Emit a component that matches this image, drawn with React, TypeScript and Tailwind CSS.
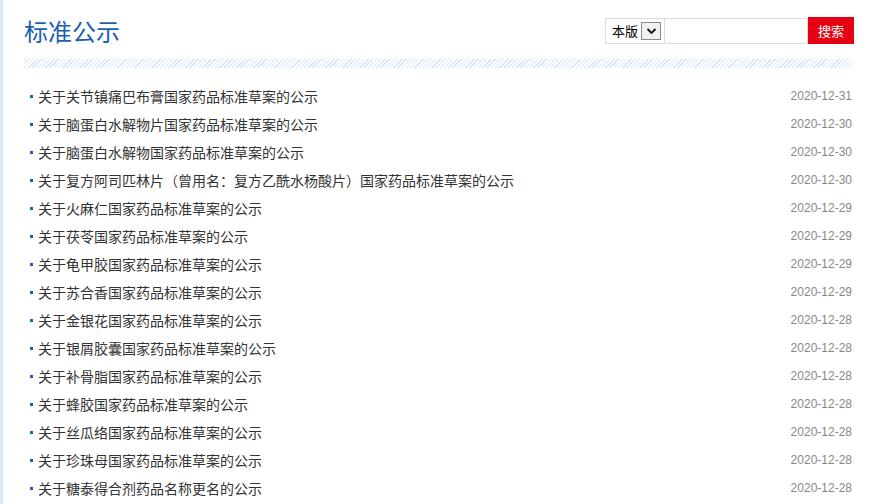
import React from 'react';

const items: [string, string][] = [
  ['关于关节镇痛巴布膏国家药品标准草案的公示', '2020-12-31'],
  ['关于脑蛋白水解物片国家药品标准草案的公示', '2020-12-30'],
  ['关于脑蛋白水解物国家药品标准草案的公示', '2020-12-30'],
  ['关于复方阿司匹林片（曾用名：复方乙酰水杨酸片）国家药品标准草案的公示', '2020-12-30'],
  ['关于火麻仁国家药品标准草案的公示', '2020-12-29'],
  ['关于茯苓国家药品标准草案的公示', '2020-12-29'],
  ['关于龟甲胶国家药品标准草案的公示', '2020-12-29'],
  ['关于苏合香国家药品标准草案的公示', '2020-12-29'],
  ['关于金银花国家药品标准草案的公示', '2020-12-28'],
  ['关于银屑胶囊国家药品标准草案的公示', '2020-12-28'],
  ['关于补骨脂国家药品标准草案的公示', '2020-12-28'],
  ['关于蜂胶国家药品标准草案的公示', '2020-12-28'],
  ['关于丝瓜络国家药品标准草案的公示', '2020-12-28'],
  ['关于珍珠母国家药品标准草案的公示', '2020-12-28'],
  ['关于糖泰得合剂药品名称更名的公示', '2020-12-28'],
];

export default function App() {
  return (
    <div className="flex h-[504px] w-[871px] overflow-hidden bg-white font-['Noto_Sans_CJK_SC',sans-serif]">
      {/* left edge strip */}
      <div className="w-[3px] shrink-0 bg-[#dbe8f6]" />

      <div className="flex-1 pl-[21px] pr-[17px]">
        {/* Header */}
        <div className="flex h-[59px] items-center justify-between pt-[2px]">
          <h1 className="text-[24px] leading-none text-[#1c5eb4]">标准公示</h1>
          <div className="flex items-center">
            <div className="flex h-[26px] w-[60px] items-center gap-[3px] border border-[#dcdcdc] pl-[6px] text-[13px] text-black">
              <span>本版</span>
              <span className="flex h-[18px] w-[20px] items-center justify-center border border-[#8a8a8a] bg-[#f0f0f0]">
                <svg width="11" height="8" viewBox="0 0 11 8">
                  <path d="M1.5 2 L5.5 6 L9.5 2" fill="none" stroke="#111" strokeWidth="1.8" />
                </svg>
              </span>
            </div>
            <div className="h-[26px] w-[143px] border border-l-0 border-[#dcdcdc]" />
            <button className="h-[27px] w-[46px] bg-[#e60012] text-[13px] text-white">搜索</button>
          </div>
        </div>

        <div className="mr-[2px]">
          {/* Hatched divider */}
          <div className="h-[9px] bg-[repeating-linear-gradient(135deg,#d3e4f5_0px,#d3e4f5_1px,#ffffff_1px,#ffffff_3px)]" />

          {/* List */}
          <ul className="pt-[14px]">
            {items.map(([title, date], i) => (
              <li key={i} className="flex h-[28px] items-center justify-between">
                <div className="flex items-center">
                  <span className="ml-[6px] mr-[5px] h-[3px] w-[3px] bg-[#1c5eb4]" />
                  <span className="text-[14px] text-[#333]">{title}</span>
                </div>
                <span className="font-['Liberation_Sans',sans-serif] text-[12px] text-[#888]">{date}</span>
              </li>
            ))}
          </ul>
        </div>
      </div>
    </div>
  );
}
